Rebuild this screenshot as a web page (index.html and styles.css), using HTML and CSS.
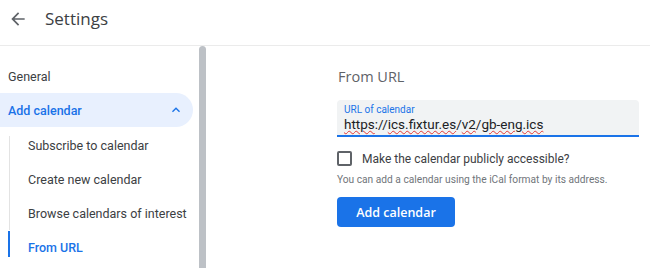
FILE: index.html
```html
<!DOCTYPE html>
<html lang="en">
<head>
    <meta charset="UTF-8">
    <title>Settings</title>
    <link rel="stylesheet" href="styles.css">
</head>
<body>
    <div class="header">
        <span class="back">
            <svg width="20" height="20" viewBox="0 0 24 24"><path d="M20 11H7.83l5.59-5.59L12 4l-8 8 8 8 1.41-1.41L7.83 13H20v-2z" fill="#5f6368"/></svg>
        </span>
        <h1>Settings</h1>
    </div>

    <div class="page">
        <div class="sidebar">
            <a href="#" class="nav-item">General</a>
            <a href="#" class="nav-item open">
                Add calendar
                <svg width="16" height="16" viewBox="0 0 24 24"><path d="M7.41 15.41L12 10.83l4.59 4.58L18 14l-6-6-6 6z" fill="#1a73e8"/></svg>
            </a>
            <div class="sub-list">
                <a href="#" class="sub-item">Subscribe to calendar</a>
                <a href="#" class="sub-item">Create new calendar</a>
                <a href="#" class="sub-item">Browse calendars of interest</a>
                <a href="#" class="sub-item active">From URL</a>
            </div>
        </div>
        <div class="scrollbar"><div class="thumb"></div></div>

        <div class="main">
            <h2>From URL</h2>
            <div class="field">
                <label>URL of calendar</label>
                <div class="value"><span class="typo">https</span>://<span class="typo">ics.fixtur.es</span>/<span class="typo">v2</span>/<span class="typo">gb-eng.ics</span></div>
            </div>
            <label class="check">
                <span class="box"></span>
                Make the calendar publicly accessible?
            </label>
            <p class="hint">You can add a calendar using the iCal format by its address.</p>
            <button class="primary">Add calendar</button>
        </div>
    </div>
</body>
</html>
```

FILE: styles.css
```css
body {
    margin: 0;
    font-family: Roboto, "Liberation Sans", Arial, sans-serif;
    color: #3c4043;
    background: #fff;
    width: 650px;
    height: 268px;
    overflow: hidden;
}
.header {
    display: flex;
    align-items: center;
    box-sizing: border-box;
    height: 46px;
    border-bottom: 1px solid #ebebeb;
    padding-left: 8px;
    padding-bottom: 8px;
}
.back {
    display: flex;
    width: 20px;
    height: 20px;
}
.header h1 {
    margin: 0 0 0 17px;
    font-family: "Open Sans", Roboto, sans-serif;
    font-size: 17px;
    font-weight: 400;
    color: #3c4043;
}
.page {
    display: flex;
    height: 222px;
}
.sidebar {
    width: 199px;
    padding-top: 13px;
    box-sizing: border-box;
}
.nav-item {
    display: flex;
    align-items: center;
    justify-content: space-between;
    height: 34px;
    width: 193px;
    box-sizing: border-box;
    padding: 0 9px 0 8px;
    font-size: 12.5px;
    color: #3c4043;
    text-decoration: none;
}
.nav-item.open {
    background: #e8f0fe;
    color: #1a73e8;
    border-radius: 0 17px 17px 0;
    font-weight: 500;
}
.sub-list {
    padding-top: 1px;
    background: linear-gradient(#e3e3e3, #e3e3e3) no-repeat 9px 9px / 1px 100%;
}
.sub-item {
    display: flex;
    align-items: center;
    height: 34px;
    padding-left: 28px;
    font-size: 12.5px;
    color: #3c4043;
    text-decoration: none;
}
.sub-item.active {
    color: #1a73e8;
    font-weight: 500;
    background: #fff linear-gradient(#1a73e8, #1a73e8) no-repeat 8px 1px / 2px 26px;
}
.scrollbar {
    width: 8px;
}
.thumb {
    width: 7px;
    height: 100%;
    background: #bdc1c6;
    border-radius: 4px 4px 0 0;
}
.main {
    padding: 22px 0 0 130px;
}
.main h2 {
    margin: 0 0 15px 1px;
    font-family: "Open Sans", Roboto, sans-serif;
    font-size: 14.5px;
    font-weight: 400;
    color: #5f6368;
    line-height: 17px;
}
.field {
    width: 302px;
    height: 37px;
    box-sizing: border-box;
    background: #f1f3f4;
    border-radius: 4px 4px 0 0;
    border-bottom: 2px solid #1a73e8;
    padding: 4px 0 0 7px;
}
.field label {
    display: block;
    font-size: 10px;
    line-height: 12px;
    color: #1a73e8;
}
.value {
    font-size: 13.5px;
    line-height: 17px;
    color: #202124;
}
.typo {
    text-decoration: underline wavy #e53935;
    text-decoration-thickness: 1px;
    text-underline-offset: 1px;
}
.check {
    display: flex;
    align-items: center;
    margin-top: 14px;
    font-size: 12px;
    color: #3c4043;
}
.box {
    width: 15px;
    height: 15px;
    box-sizing: border-box;
    border: 2px solid #5f6368;
    border-radius: 2px;
    margin-right: 10px;
}
.hint {
    margin: 8px 0 0;
    font-size: 10.2px;
    color: #70757a;
}
.primary {
    margin-top: 12px;
    width: 118px;
    height: 30px;
    border: none;
    border-radius: 4px;
    background: #1a73e8;
    color: #fff;
    font-family: "Open Sans", Roboto, sans-serif;
    font-size: 12.5px;
    font-weight: 600;
}
```
